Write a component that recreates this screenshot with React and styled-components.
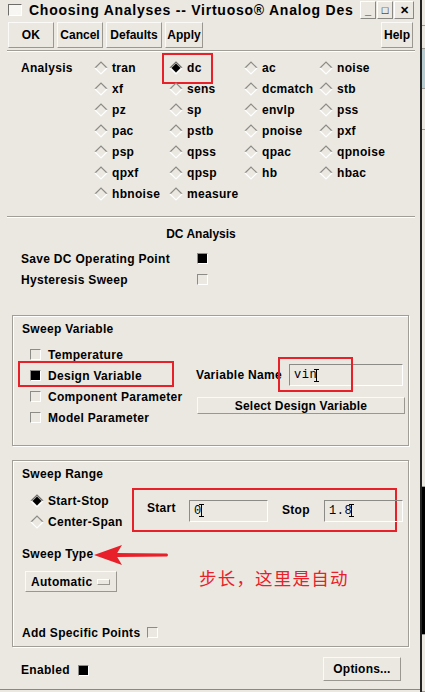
import React from 'react';
import styled, { createGlobalStyle } from 'styled-components';

const BG = '#ebe8e2';
const SHADOW = '#9a9791';
const RED = '#e8202a';

const GlobalStyle = createGlobalStyle`
  html, body {
    margin: 0;
    padding: 0;
    background: ${BG};
  }
  body {
    font-family: 'Liberation Sans', Arial, sans-serif;
    font-size: 12px;
    font-weight: bold;
    color: #000;
  }
`;

const Screen = styled.div`
  display: flex;
  width: 425px;
  height: 692px;
  overflow: hidden;
`;

const Dialog = styled.div`
  width: 420px;
  height: 689px;
  display: flex;
  flex-direction: column;
  background: ${BG};
  border-bottom: 1px solid #8a8883;
  flex-shrink: 0;
`;

const SideStrip = styled.div`
  width: 5px;
  border-left: 2px solid #222;
  display: flex;
  flex-direction: column;
`;

const StripPart = styled.div`
  height: ${(p) => p.h}px;
  background: ${(p) => p.bg};
  border-bottom: 1px solid #9c9a95;
`;

/* title bar */
const TitleBar = styled.div`
  height: 20px;
  display: flex;
  align-items: center;
  padding: 0 6px 0 8px;
  gap: 7px;
`;

const WinMenu = styled.div`
  width: 12px;
  height: 10px;
  border: 1px solid #6f6d69;
  border-right-color: #fff;
  border-bottom-color: #fff;
  background: #f7f6f3;
  flex-shrink: 0;
`;

const TitleText = styled.div`
  flex: 1;
  min-width: 0;
  font-size: 14px;
  letter-spacing: 0.75px;
  white-space: nowrap;
  overflow: hidden;
`;

const WinButtons = styled.div`
  display: flex;
  gap: 1px;
  flex-shrink: 0;
`;

const WinButton = styled.div`
  box-sizing: border-box;
  width: ${(p) => p.w || 16}px;
  height: 18px;
  border: 1px solid #fff;
  border-right-color: #8a8883;
  border-bottom-color: #8a8883;
  display: flex;
  align-items: center;
  justify-content: center;
  overflow: hidden;
  font-size: 11px;
`;

/* toolbar */
const Toolbar = styled.div`
  height: 30px;
  display: flex;
  align-items: center;
  padding: 0 7px 0 8px;
  gap: 3px;
`;

const Spacer = styled.div`
  flex: 1;
`;

const Button = styled.div`
  box-sizing: border-box;
  width: ${(p) => p.w}px;
  height: ${(p) => p.h || 26}px;
  border: 1px solid #fbfaf8;
  border-right-color: ${SHADOW};
  border-bottom-color: ${SHADOW};
  display: flex;
  align-items: center;
  justify-content: center;
  white-space: nowrap;
  letter-spacing: ${(p) => (p.tight ? 0 : 0.2)}px;
`;

const Separator = styled.div`
  height: 1px;
  margin: ${(p) => p.mt || 0}px 5px 0 7px;
  background: #a19e98;
  border-bottom: 1px solid #fff;
`;

/* analysis grid */
const AnalysisGrid = styled.div`
  display: grid;
  grid-template-columns: 73px repeat(4, 75px);
  grid-auto-rows: 21px;
  margin-top: 5px;
  padding-left: 21px;
`;

const GridLabel = styled.div`
  display: flex;
  align-items: center;
  grid-row: span 7;
  align-self: start;
  height: 21px;
  letter-spacing: 0.3px;
`;

const Choice = styled.label`
  position: relative;
  display: flex;
  align-items: center;
  gap: ${(p) => p.gap || 4}px;
  height: 21px;
  letter-spacing: 0.3px;
  white-space: nowrap;
`;

const Mark = styled.div`
  position: absolute;
  border: 2px solid ${RED};
  left: ${(p) => p.l}px;
  top: ${(p) => p.t}px;
  width: ${(p) => p.w}px;
  height: ${(p) => p.h}px;
  box-sizing: border-box;
  pointer-events: none;
`;

const Diamond = ({ on }) => (
  <svg width="14" height="14" viewBox="0 0 14 14">
    <polyline points="1,7 7,1 13,7" fill="none" stroke={on ? '#6e6c68' : '#8d8b86'} strokeWidth="1.2" />
    <polyline points="1,7 7,13 13,7" fill="none" stroke="#fff" strokeWidth="1.2" />
    {on && <polygon points="2.5,7 7,2.5 11.5,7 7,11.5" fill="#000" />}
  </svg>
);

/* DC section */
const SectionTitle = styled.div`
  height: 22px;
  margin-top: 5px;
  display: flex;
  align-items: center;
  justify-content: center;
  padding-right: 18px;
`;

const OptionRow = styled.div`
  height: 21px;
  display: flex;
  align-items: center;
  padding-left: ${(p) => (p.flush ? 0 : 21)}px;
  letter-spacing: 0.3px;
  margin-top: ${(p) => p.mt || 0}px;
`;

const OptionLabel = styled.div`
  width: ${(p) => p.w}px;
`;

const Check = styled.div`
  width: 11px;
  height: 11px;
  box-sizing: border-box;
  border: 1px solid #8d8b86;
  border-right-color: #fff;
  border-bottom-color: #fff;
  background: ${(p) => (p.on ? '#000' : BG)};
  flex-shrink: 0;
`;

/* group boxes */
const Group = styled.div`
  margin: ${(p) => p.mt}px 11px 0 12px;
  height: ${(p) => p.h}px;
  box-sizing: border-box;
  border: 1px solid #a19e98;
  box-shadow: 1px 1px 0 #fff, inset 1px 1px 0 #fff;
  padding: 5px 0 0 9px;
  display: flex;
  flex-direction: column;
  flex-shrink: 0;
`;

const GroupTitle = styled.div`
  height: 16px;
  display: flex;
  align-items: center;
  letter-spacing: 0.3px;
`;

const VariableBody = styled.div`
  display: flex;
  margin-top: 7px;
`;

const ChoiceColumn = styled.div`
  width: ${(p) => p.w}px;
  flex-shrink: 0;
  padding-left: 8px;
  display: flex;
  flex-direction: column;
`;

const VariableSide = styled.div`
  display: flex;
  flex-direction: column;
  padding-top: 20px;
`;

const NameRow = styled.div`
  display: flex;
  align-items: center;
  height: 22px;
  letter-spacing: 0.3px;
`;

const Field = styled.div`
  position: relative;
  box-sizing: border-box;
  width: ${(p) => p.w}px;
  height: 22px;
  border: 1px solid #8d8b86;
  border-right-color: #fff;
  border-bottom-color: #fff;
  display: flex;
  align-items: center;
  padding-left: 4px;
  margin-top: ${(p) => p.dy || 0}px;
  font-family: 'Liberation Mono', 'DejaVu Sans Mono', monospace;
  font-weight: normal;
  font-size: 12px;
  letter-spacing: 0.5px;
`;

const Caret = styled.span`
  display: inline-block;
  width: 1px;
  height: 13px;
  margin-left: -1px;
  background: #000;
  position: relative;
  &::before, &::after {
    content: '';
    position: absolute;
    left: -2px;
    width: 5px;
    height: 1px;
    background: #000;
  }
  &::before { top: 0; }
  &::after { bottom: 0; }
`;

const RangeBody = styled.div`
  display: flex;
  align-items: center;
  margin-top: 8px;
`;

const InputsArea = styled.div`
  position: relative;
  display: flex;
  align-items: center;
  height: 44px;
  padding-left: 15px;
  margin-top: -3px;
`;

const InputLabel = styled.div`
  width: ${(p) => p.w}px;
  letter-spacing: 0.3px;
  margin-top: ${(p) => p.dy || 0}px;
  margin-left: ${(p) => p.ml || 0}px;
`;

const TypeRow = styled.div`
  position: relative;
  margin-top: 14px;
`;

const Arrow = styled.svg`
  position: absolute;
  left: 72px;
  top: -2px;
`;

const MenuRow = styled.div`
  display: flex;
  align-items: center;
  gap: 82px;
  margin-top: 3px;
  padding-left: 3px;
`;

const OptionMenu = styled.div`
  box-sizing: border-box;
  width: 92px;
  height: 21px;
  border: 1px solid #fbfaf8;
  border-right-color: ${SHADOW};
  border-bottom-color: ${SHADOW};
  display: flex;
  align-items: center;
  justify-content: space-between;
  padding: 0 6px 0 5px;
  letter-spacing: 0.3px;
`;

const MenuDash = styled.div`
  width: 11px;
  height: 4px;
  border: 1px solid #fff;
  border-right-color: ${SHADOW};
  border-bottom-color: ${SHADOW};
`;

const Note = styled.div`
  color: ${RED};
  font-family: 'Noto Sans CJK SC', sans-serif;
  font-weight: normal;
  font-size: 17.5px;
  letter-spacing: 1.2px;
  margin-bottom: 8px;
`;

const Footer = styled.div`
  flex: 1;
  display: flex;
  align-items: center;
  justify-content: space-between;
  padding: 6px 19px 4px 21px;
`;

const EnabledGroup = styled.div`
  display: flex;
  align-items: center;
  gap: 8px;
  letter-spacing: 0.3px;
  padding-top: 2px;
`;

const analyses = [
  ['tran', 'dc', 'ac', 'noise'],
  ['xf', 'sens', 'dcmatch', 'stb'],
  ['pz', 'sp', 'envlp', 'pss'],
  ['pac', 'pstb', 'pnoise', 'pxf'],
  ['psp', 'qpss', 'qpac', 'qpnoise'],
  ['qpxf', 'qpsp', 'hb', 'hbac'],
  ['hbnoise', 'measure'],
];

const sweepVars = ['Temperature', 'Design Variable', 'Component Parameter', 'Model Parameter'];

export default function App() {
  return (
    <Screen>
      <GlobalStyle />
      <Dialog>
        <TitleBar>
          <WinMenu />
          <TitleText>Choosing Analyses -- Virtuoso® Analog Des</TitleText>
          <WinButtons>
            <WinButton>_</WinButton>
            <WinButton>□</WinButton>
            <WinButton w={20}>✕</WinButton>
          </WinButtons>
        </TitleBar>

        <Toolbar>
          <Button w={46}>OK</Button>
          <Button w={46} tight>Cancel</Button>
          <Button w={56} tight>Defaults</Button>
          <Button w={38} tight>Apply</Button>
          <Spacer />
          <Button w={32} tight>Help</Button>
        </Toolbar>
        <Separator />

        <AnalysisGrid>
          <GridLabel>Analysis</GridLabel>
          {analyses.map((row) =>
            row.map((name, i) => (
              <Choice key={name} style={{ gridColumn: i + 2 }}>
                <Diamond on={name === 'dc'} />
                {name}
                {name === 'dc' && <Mark l={-7} t={-4} w={51} h={31} />}
              </Choice>
            ))
          )}
        </AnalysisGrid>
        <Separator mt={12} />

        <SectionTitle>DC Analysis</SectionTitle>
        <OptionRow mt={3}>
          <OptionLabel w={176}>Save DC Operating Point</OptionLabel>
          <Check on />
        </OptionRow>
        <OptionRow>
          <OptionLabel w={176}>Hysteresis Sweep</OptionLabel>
          <Check />
        </OptionRow>

        <Group mt={25} h={131}>
          <GroupTitle>Sweep Variable</GroupTitle>
          <VariableBody>
            <ChoiceColumn w={166}>
              {sweepVars.map((name) => (
                <Choice key={name} gap={7}>
                  <Check on={name === 'Design Variable'} />
                  {name}
                  {name === 'Design Variable' && <Mark l={-12} t={-4} w={156} h={26} />}
                </Choice>
              ))}
            </ChoiceColumn>
            <VariableSide>
              <NameRow>
                <InputLabel w={93}>Variable Name</InputLabel>
                <Field w={114}>
                  vin<Caret />
                  <Mark l={-12} t={-8} w={75} h={35} />
                </Field>
              </NameRow>
              <Button w={208} h={17} style={{ marginTop: 11, marginLeft: 1 }}>
                Select Design Variable
              </Button>
            </VariableSide>
          </VariableBody>
        </Group>

        <Group mt={14} h={187}>
          <GroupTitle>Sweep Range</GroupTitle>
          <RangeBody>
            <ChoiceColumn w={102}>
              <Choice>
                <Diamond on />
                Start-Stop
              </Choice>
              <Choice>
                <Diamond />
                Center-Span
              </Choice>
            </ChoiceColumn>
            <InputsArea>
              <Mark l={0} t={0} w={265} h={44} />
              <InputLabel w={42} dy={-3}>Start</InputLabel>
              <Field w={79} dy={2}>
                0<Caret />
              </Field>
              <InputLabel w={42} dy={1} ml={14}>Stop</InputLabel>
              <Field w={79} dy={2}>
                1.8<Caret />
              </Field>
            </InputsArea>
          </RangeBody>
          <TypeRow>
            <GroupTitle>Sweep Type</GroupTitle>
            <Arrow width="76" height="22" viewBox="0 0 76 22">
              <path d="M22 9 L73 9.5 Q75 11 73 12.5 L22 13 Z" fill={RED} />
              <polygon points="0,11 28,1 22,11 28,21" fill={RED} />
            </Arrow>
          </TypeRow>
          <MenuRow>
            <OptionMenu>
              Automatic
              <MenuDash />
            </OptionMenu>
            <Note>步长，这里是自动</Note>
          </MenuRow>
          <OptionRow flush mt={24}>
            <OptionLabel w={125}>Add Specific Points</OptionLabel>
            <Check />
          </OptionRow>
        </Group>

        <Footer>
          <EnabledGroup>
            Enabled
            <Check on />
          </EnabledGroup>
          <Button w={78} h={24}>Options...</Button>
        </Footer>
      </Dialog>
      <SideStrip>
        <StripPart h={25} bg={BG} />
        <StripPart h={22} bg={BG} />
        <StripPart h={40} bg="#b9cdd0" />
        <StripPart h={40} bg={BG} />
        <StripPart h={360} bg={BG} />
        <StripPart h={148} bg="#000" />
        <StripPart h={57} bg={BG} />
      </SideStrip>
    </Screen>
  );
}
